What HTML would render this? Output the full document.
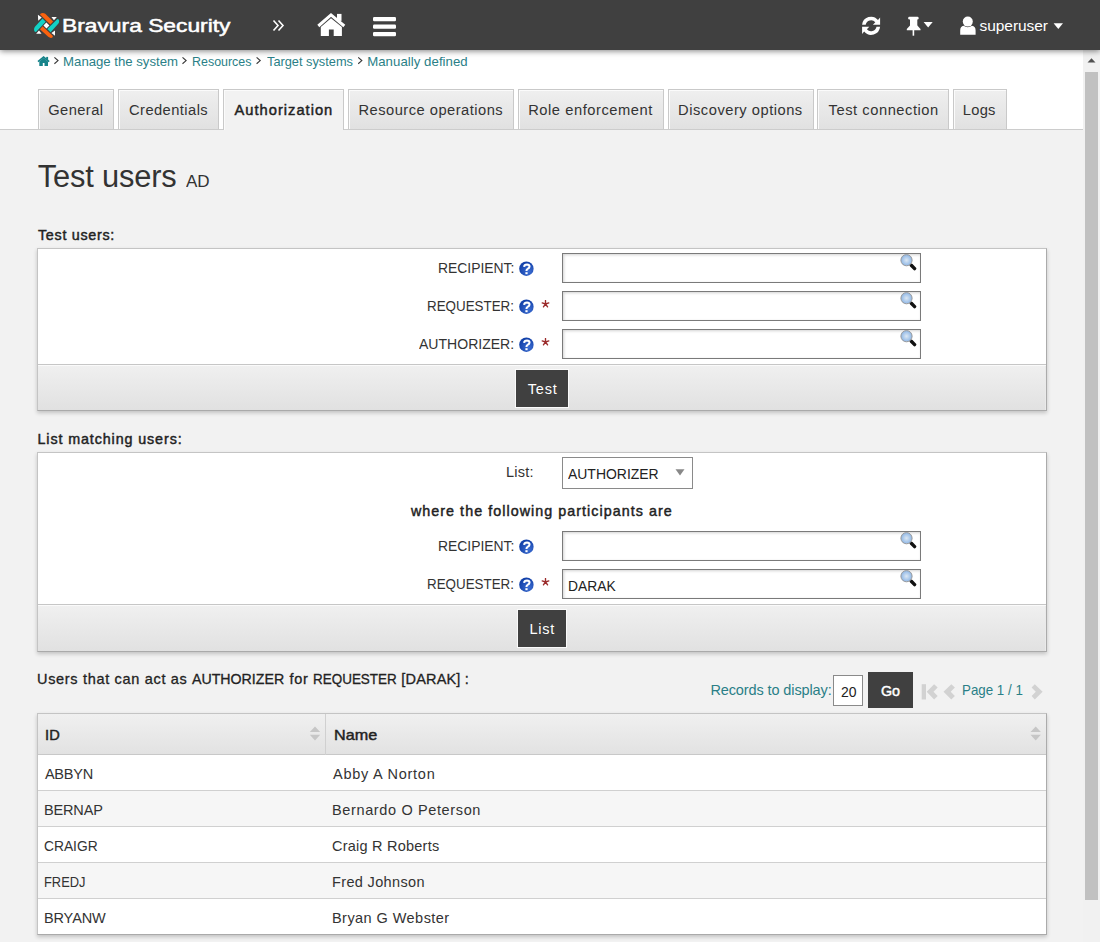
<!DOCTYPE html>
<html><head><meta charset="utf-8">
<style>
*{box-sizing:border-box;margin:0;padding:0}
html,body{width:1100px;height:942px;overflow:hidden;background:#f2f2f2;font-family:"Liberation Sans",sans-serif;color:#333}
.a{position:absolute}
.t{position:absolute;white-space:nowrap;font-family:"Liberation Sans",sans-serif}
#hdr{position:absolute;left:0;top:0;width:1100px;height:50px;background:#404040;box-shadow:0 1px 6px rgba(0,0,0,.5);z-index:2}
#top{position:absolute;left:0;top:50px;width:1083px;height:80px;background:#fff;border-bottom:1px solid #ccc}
.tab{position:absolute;top:89px;height:40px;border:1px solid #c9c9c9;border-bottom:none;background:linear-gradient(#efefef,#e1e1e1);box-shadow:inset 1px 1px 0 #fbfbfb}
.tab.act{background:#f2f2f2;height:41px}
.panel{position:absolute;left:37px;width:1010px;background:#fff;border:1px solid #c4c4c4;border-right-color:#ababab;border-bottom-color:#aaa;box-shadow:0 2px 4px rgba(0,0,0,.2)}
.foot{position:absolute;left:0;right:0;bottom:0;border-top:1px solid #c6c6c6;background:linear-gradient(#f0f0f0,#e1e1e1);box-shadow:inset 0 1px 0 #fafafa,inset -1px 0 0 #eaeaea}
.inp{position:absolute;border:1px solid #7a7a7a;background:#fff;box-shadow:inset 1px 1px 3px rgba(0,0,0,.18)}
.btn{position:absolute;background:#404040;border:1px solid #fafafa}
</style></head><body>
<div id="hdr">
<svg class="a" style="left:32px;top:10px" width="30" height="30" viewBox="0 0 942 942">
  <path fill="#f9620f" d="M250 145 Q258 95 330 95 Q385 95 415 120 L665 365 L575 455 Z"/>
  <path fill="#f9620f" d="M250 605 L335 510 L648 805 Q672 850 625 872 Q565 885 520 850 Z"/>
  <path fill="#12d2c6" d="M330 270 L430 370 L125 688 Q72 692 64 625 Q60 560 100 520 Z"/>
  <path fill="#12d2c6" d="M480 600 L792 288 Q842 275 852 340 Q858 390 830 420 L585 702 Z"/>
  <path fill="#fff" d="M185 150 L305 235 L195 335 Z M610 220 L780 220 L690 320 Z M130 745 L300 745 L220 640 Z M722 640 L722 812 L610 722 Z M452 390 L547 485 L455 582 L360 490 Z"/>
</svg>
<svg class="a" style="left:270px;top:17px" width="18" height="17" viewBox="270 17 18 17">
  <path fill="none" stroke="#fff" stroke-width="1.6" d="M273.5 20.5 L278 25.5 L273.5 30.5 M278.5 20.5 L283 25.5 L278.5 30.5"/>
</svg>
<svg class="a" style="left:315px;top:12px" width="32" height="26" viewBox="315 12 32 26">
  <path fill="none" stroke="#fff" stroke-width="3" d="M318.3 26 L331 14.9 L344.3 26"/>
  <rect fill="#fff" x="337" y="13.9" width="4.5" height="7"/>
  <path fill="#fff" d="M320.8 36.1 L320.8 27 L331 18.2 L341.9 27 L341.9 36.1 L333.7 36.1 L333.7 29.6 L328.9 29.6 L328.9 36.1 Z"/>
</svg>
<svg class="a" style="left:370px;top:14px" width="30" height="26" viewBox="370 14 30 26">
  <rect fill="#fff" x="373" y="17" width="23" height="4.3" rx="1.2"/>
  <rect fill="#fff" x="373" y="24.5" width="23" height="4.3" rx="1.2"/>
  <rect fill="#fff" x="373" y="31.9" width="23" height="4.3" rx="1.2"/>
</svg>
<svg class="a" style="left:858px;top:14px" width="26" height="24" viewBox="858 14 26 24">
  <path fill="#fff" d="M862.1 24.8 A9 9 0 0 1 878 20 L880.1 17.5 L880.1 24.8 L872.9 24.8 L875.3 22.3 A5.5 5.5 0 0 0 865.7 24.8 Z"/>
  <path fill="#fff" d="M880.1 26.8 A9 9 0 0 1 864.2 31.6 L862.1 34.1 L862.1 26.8 L869.3 26.8 L866.9 29.3 A5.5 5.5 0 0 0 876.5 26.8 Z"/>
</svg>
<svg class="a" style="left:904px;top:14px" width="32" height="24" viewBox="904 14 32 24">
  <rect fill="#fff" x="908.2" y="16.8" width="10.4" height="2.6" rx="1.2"/>
  <rect fill="#fff" x="910" y="18.5" width="7.3" height="8.5"/>
  <path fill="#fff" d="M910 25.5 L917.3 25.5 L920.5 29 L920.5 30.3 L906.8 30.3 L906.8 29 Z"/>
  <rect fill="#fff" x="912.6" y="30" width="1.6" height="5.7"/>
  <path fill="#fff" d="M923.6 22 L932.7 22 L928.15 27.5 Z"/>
</svg>
<svg class="a" style="left:958px;top:14px" width="20" height="24" viewBox="958 14 20 24">
  <circle fill="#fff" cx="967.8" cy="21.6" r="5"/>
  <path fill="#fff" d="M960.2 34.7 L960.2 30.5 Q960.2 26.3 963.6 25.8 Q967.8 28.6 972 25.8 Q975.6 26.3 975.6 30.5 L975.6 34.7 Z"/>
</svg>
<svg class="a" style="left:1050px;top:20px" width="16" height="12" viewBox="1050 20 16 12">
  <path fill="#fff" d="M1053.6 23.3 L1063 23.3 L1058.3 29 Z"/>
</svg>
<div class="t" style="left:61.7px;top:16.8px;font-size:18.3px;line-height:18.3px;font-weight:400;color:#fff;letter-spacing:0px;transform:scaleX(1.2467);transform-origin:0 0;-webkit-text-stroke:0.5px #fff">Bravura Security</div>
<div class="t" style="left:979.5px;top:17.7px;font-size:15.5px;line-height:15.5px;font-weight:400;color:#fff;letter-spacing:-0.05px;">superuser</div></div>
<div id="top"></div>
<svg class="a" style="left:36px;top:54px" width="16" height="14" viewBox="36 54 16 14">
  <path fill="none" stroke="#16838a" stroke-width="1.7" d="M38 61.6 L43.6 57 L49.2 61.6"/>
  <rect fill="#16838a" x="46.2" y="56.9" width="1.9" height="3"/>
  <path fill="#16838a" d="M39.3 65.9 L39.3 61.4 L43.6 57.9 L48 61.4 L48 65.9 L44.5 65.9 L44.5 63.1 L42.8 63.1 L42.8 65.9 Z"/>
</svg>
<svg class="a" style="left:50px;top:50px" width="420" height="22" viewBox="50 50 420 22">
  <path fill="none" stroke="#3a3a3a" stroke-width="1.15" d="M54.4 57.4 L58 60.6 L54.4 63.8 M182.5 57.4 L186.1 60.6 L182.5 63.8 M256.6 57.4 L260.2 60.6 L256.6 63.8 M358.2 57.4 L361.8 60.6 L358.2 63.8"/>
</svg>
<div class="tab" style="left:38px;width:76px"></div>
<div class="tab" style="left:118px;width:101px"></div>
<div class="tab act" style="left:223px;width:121px"></div>
<div class="tab" style="left:348px;width:166px"></div>
<div class="tab" style="left:518px;width:146px"></div>
<div class="tab" style="left:668px;width:146px"></div>
<div class="tab" style="left:817px;width:132px"></div>
<div class="tab" style="left:953px;width:54px"></div>
<div class="panel" style="top:248px;height:163px"><div class="foot" style="height:46px"></div></div>
<svg class="a" style="left:518.5px;top:298.8px" width="15" height="15" viewBox="0 0 15 15"><defs><radialGradient id="hg" cx="65%" cy="70%" r="65%"><stop offset="0" stop-color="#3d6fd4"/><stop offset="1" stop-color="#1442aa"/></radialGradient></defs><circle cx="7.4" cy="7.7" r="7.2" fill="url(#hg)"/><path fill="none" stroke="#fff" stroke-width="2.1" d="M5.1 5.8 Q5.4 3.5 8 3.5 Q10.6 3.6 10.5 5.7 Q10.4 7 8.6 7.9 Q7.5 8.4 7.5 9.9"/><rect fill="#fff" x="6.4" y="11.2" width="2.2" height="2"/></svg>
<svg class="a" style="left:518.5px;top:260.8px" width="15" height="15" viewBox="0 0 15 15"><defs><radialGradient id="hg" cx="65%" cy="70%" r="65%"><stop offset="0" stop-color="#3d6fd4"/><stop offset="1" stop-color="#1442aa"/></radialGradient></defs><circle cx="7.4" cy="7.7" r="7.2" fill="url(#hg)"/><path fill="none" stroke="#fff" stroke-width="2.1" d="M5.1 5.8 Q5.4 3.5 8 3.5 Q10.6 3.6 10.5 5.7 Q10.4 7 8.6 7.9 Q7.5 8.4 7.5 9.9"/><rect fill="#fff" x="6.4" y="11.2" width="2.2" height="2"/></svg>
<svg class="a" style="left:541px;top:299.5px" width="9" height="9" viewBox="0 0 9 9"><path stroke="#9b2b2b" stroke-width="1.35" stroke-linecap="round" d="M4.5 4 L4.50 0.50 M4.5 4 L7.83 2.92 M4.5 4 L6.56 6.83 M4.5 4 L2.44 6.83 M4.5 4 L1.17 2.92"/></svg>
<svg class="a" style="left:518.5px;top:336.8px" width="15" height="15" viewBox="0 0 15 15"><defs><radialGradient id="hg" cx="65%" cy="70%" r="65%"><stop offset="0" stop-color="#3d6fd4"/><stop offset="1" stop-color="#1442aa"/></radialGradient></defs><circle cx="7.4" cy="7.7" r="7.2" fill="url(#hg)"/><path fill="none" stroke="#fff" stroke-width="2.1" d="M5.1 5.8 Q5.4 3.5 8 3.5 Q10.6 3.6 10.5 5.7 Q10.4 7 8.6 7.9 Q7.5 8.4 7.5 9.9"/><rect fill="#fff" x="6.4" y="11.2" width="2.2" height="2"/></svg>
<svg class="a" style="left:541px;top:337.5px" width="9" height="9" viewBox="0 0 9 9"><path stroke="#9b2b2b" stroke-width="1.35" stroke-linecap="round" d="M4.5 4 L4.50 0.50 M4.5 4 L7.83 2.92 M4.5 4 L6.56 6.83 M4.5 4 L2.44 6.83 M4.5 4 L1.17 2.92"/></svg>
<div class="inp" style="left:562px;top:253px;width:359px;height:30px"></div>
<div class="inp" style="left:562px;top:291px;width:359px;height:30px"></div>
<div class="inp" style="left:562px;top:329px;width:359px;height:30px"></div>
<svg class="a" style="left:899px;top:253px" width="18" height="18" viewBox="0 0 18 18"><defs><radialGradient id="mg899253" cx="50%" cy="50%" r="50%"><stop offset="0" stop-color="#dde8f3"/><stop offset="1" stop-color="#8db6e6"/></radialGradient></defs><path stroke="#111" stroke-width="3.4" stroke-linecap="round" d="M12.3 12.2 L15.6 15.6"/><circle cx="7.5" cy="7.2" r="5.6" fill="url(#mg899253)" stroke="#9a9a9a" stroke-width="1"/></svg>
<svg class="a" style="left:899px;top:291px" width="18" height="18" viewBox="0 0 18 18"><defs><radialGradient id="mg899291" cx="50%" cy="50%" r="50%"><stop offset="0" stop-color="#dde8f3"/><stop offset="1" stop-color="#8db6e6"/></radialGradient></defs><path stroke="#111" stroke-width="3.4" stroke-linecap="round" d="M12.3 12.2 L15.6 15.6"/><circle cx="7.5" cy="7.2" r="5.6" fill="url(#mg899291)" stroke="#9a9a9a" stroke-width="1"/></svg>
<svg class="a" style="left:899px;top:329px" width="18" height="18" viewBox="0 0 18 18"><defs><radialGradient id="mg899329" cx="50%" cy="50%" r="50%"><stop offset="0" stop-color="#dde8f3"/><stop offset="1" stop-color="#8db6e6"/></radialGradient></defs><path stroke="#111" stroke-width="3.4" stroke-linecap="round" d="M12.3 12.2 L15.6 15.6"/><circle cx="7.5" cy="7.2" r="5.6" fill="url(#mg899329)" stroke="#9a9a9a" stroke-width="1"/></svg>
<div class="btn" style="left:515px;top:369px;width:54px;height:39px"></div>
<div class="panel" style="top:452px;height:200px"><div class="foot" style="height:47px"></div></div>
<div class="inp" style="left:562px;top:457px;width:131px;height:32px;box-shadow:none;border-color:#8a8a8a"></div>
<svg class="a" style="left:674px;top:468px" width="12" height="9" viewBox="0 0 12 9"><path fill="#888" d="M1.5 1.3 L10.5 1.3 L6 7.4 Z"/></svg>
<svg class="a" style="left:518.5px;top:538.8px" width="15" height="15" viewBox="0 0 15 15"><defs><radialGradient id="hg" cx="65%" cy="70%" r="65%"><stop offset="0" stop-color="#3d6fd4"/><stop offset="1" stop-color="#1442aa"/></radialGradient></defs><circle cx="7.4" cy="7.7" r="7.2" fill="url(#hg)"/><path fill="none" stroke="#fff" stroke-width="2.1" d="M5.1 5.8 Q5.4 3.5 8 3.5 Q10.6 3.6 10.5 5.7 Q10.4 7 8.6 7.9 Q7.5 8.4 7.5 9.9"/><rect fill="#fff" x="6.4" y="11.2" width="2.2" height="2"/></svg>
<svg class="a" style="left:518.5px;top:576.8px" width="15" height="15" viewBox="0 0 15 15"><defs><radialGradient id="hg" cx="65%" cy="70%" r="65%"><stop offset="0" stop-color="#3d6fd4"/><stop offset="1" stop-color="#1442aa"/></radialGradient></defs><circle cx="7.4" cy="7.7" r="7.2" fill="url(#hg)"/><path fill="none" stroke="#fff" stroke-width="2.1" d="M5.1 5.8 Q5.4 3.5 8 3.5 Q10.6 3.6 10.5 5.7 Q10.4 7 8.6 7.9 Q7.5 8.4 7.5 9.9"/><rect fill="#fff" x="6.4" y="11.2" width="2.2" height="2"/></svg>
<svg class="a" style="left:541px;top:577.5px" width="9" height="9" viewBox="0 0 9 9"><path stroke="#9b2b2b" stroke-width="1.35" stroke-linecap="round" d="M4.5 4 L4.50 0.50 M4.5 4 L7.83 2.92 M4.5 4 L6.56 6.83 M4.5 4 L2.44 6.83 M4.5 4 L1.17 2.92"/></svg>
<div class="inp" style="left:562px;top:531px;width:359px;height:30px"></div>
<div class="inp" style="left:562px;top:569px;width:359px;height:30px"></div>
<svg class="a" style="left:899px;top:531px" width="18" height="18" viewBox="0 0 18 18"><defs><radialGradient id="mg899531" cx="50%" cy="50%" r="50%"><stop offset="0" stop-color="#dde8f3"/><stop offset="1" stop-color="#8db6e6"/></radialGradient></defs><path stroke="#111" stroke-width="3.4" stroke-linecap="round" d="M12.3 12.2 L15.6 15.6"/><circle cx="7.5" cy="7.2" r="5.6" fill="url(#mg899531)" stroke="#9a9a9a" stroke-width="1"/></svg>
<svg class="a" style="left:899px;top:569px" width="18" height="18" viewBox="0 0 18 18"><defs><radialGradient id="mg899569" cx="50%" cy="50%" r="50%"><stop offset="0" stop-color="#dde8f3"/><stop offset="1" stop-color="#8db6e6"/></radialGradient></defs><path stroke="#111" stroke-width="3.4" stroke-linecap="round" d="M12.3 12.2 L15.6 15.6"/><circle cx="7.5" cy="7.2" r="5.6" fill="url(#mg899569)" stroke="#9a9a9a" stroke-width="1"/></svg>
<div class="btn" style="left:517px;top:609px;width:50px;height:39px"></div>
<div class="a" style="left:833px;top:675px;width:30px;height:31px;background:#fff;border:1px solid #8a8a8a"></div>
<div class="btn" style="left:867px;top:671px;width:47px;height:38px;border-color:#f2f2f2"></div>
<svg class="a" style="left:918px;top:680px" width="130" height="24" viewBox="918 680 130 24">
  <g fill="#d2d2d2">
    <rect x="921.7" y="684.2" width="4.3" height="15.3"/>
    <path d="M926.7 691.8 L934.1 684.2 L937.7 687.6 L933.5 691.8 L937.7 696.1 L934.1 699.5 Z"/>
    <path d="M943.5 691.8 L951.3 684.2 L954.9 687.6 L950.7 691.8 L954.9 696.1 L951.3 699.5 Z"/>
    <path d="M1042.6 691.8 L1034.8 684.2 L1031.6 687.6 L1035.8 691.8 L1031.6 696.1 L1034.8 699.5 Z"/>
  </g>
</svg>
<div class="panel" style="top:713px;height:222px">
<div class="a" style="left:0;top:0;width:1008px;height:41px;background:linear-gradient(#f0f0f0,#e2e2e2);border-bottom:1px solid #c8c8c8"></div>
<div class="a" style="left:287px;top:0;width:1px;height:41px;background:#d0d0d0"></div>
<div class="a" style="left:0;top:41px;width:1008px;height:35px;background:#fff;"></div>
<div class="a" style="left:0;top:76px;width:1008px;height:36px;background:#f6f6f6;border-top:1px solid #d0d0d0;"></div>
<div class="a" style="left:0;top:112px;width:1008px;height:36px;background:#fff;border-top:1px solid #d0d0d0;"></div>
<div class="a" style="left:0;top:148px;width:1008px;height:36px;background:#f6f6f6;border-top:1px solid #d0d0d0;"></div>
<div class="a" style="left:0;top:184px;width:1008px;height:36px;background:#fff;border-top:1px solid #d0d0d0;"></div>
</div>
<svg class="a" style="left:300px;top:720px" width="750" height="25" viewBox="300 720 750 25"><path fill="#c6c6c6" d="M309.8 732 L320.2 732 L315 726.5 Z M309.8 734.8 L320.2 734.8 L315 740.4 Z M1030.5 732 L1040.9 732 L1035.7 726.5 Z M1030.5 734.8 L1040.9 734.8 L1035.7 740.4 Z"/></svg>
<div class="a" style="left:1083px;top:50px;width:17px;height:892px;background:#f1f1f1"></div>
<svg class="a" style="left:1083px;top:50px" width="17" height="20" viewBox="0 0 17 20"><path fill="#505050" d="M4.5 12.5 L8.5 8.3 L12.5 12.5 Z"/></svg>
<div class="a" style="left:1085px;top:72px;width:13px;height:828px;background:#c1c1c1"></div>
<div class="t" style="left:63.1px;top:54.8px;font-size:13.2px;line-height:13.2px;font-weight:400;color:#2a7f87;letter-spacing:-0.012px;">Manage the system</div>
<div class="t" style="left:191.9px;top:54.8px;font-size:13.2px;line-height:13.2px;font-weight:400;color:#2a7f87;letter-spacing:0px;transform:scaleX(0.9435);transform-origin:0 0;">Resources</div>
<div class="t" style="left:266.7px;top:54.8px;font-size:13.2px;line-height:13.2px;font-weight:400;color:#2a7f87;letter-spacing:0px;transform:scaleX(0.9693);transform-origin:0 0;">Target systems</div>
<div class="t" style="left:367.2px;top:54.8px;font-size:13.2px;line-height:13.2px;font-weight:400;color:#2a7f87;letter-spacing:0.053px;">Manually defined</div>
<div class="t" style="left:48.2px;top:103.0px;font-size:14.7px;line-height:14.7px;font-weight:400;color:#333;letter-spacing:0.433px;">General</div>
<div class="t" style="left:129.0px;top:103.0px;font-size:14.7px;line-height:14.7px;font-weight:400;color:#333;letter-spacing:0.44px;">Credentials</div>
<div class="t" style="left:234.5px;top:103.0px;font-size:14.7px;line-height:14.7px;font-weight:400;color:#222;letter-spacing:1.0px;;-webkit-text-stroke:0.45px #222">Authorization</div>
<div class="t" style="left:358.5px;top:103.0px;font-size:14.7px;line-height:14.7px;font-weight:400;color:#333;letter-spacing:0.478px;">Resource operations</div>
<div class="t" style="left:528.2px;top:103.0px;font-size:14.7px;line-height:14.7px;font-weight:400;color:#333;letter-spacing:0.546px;">Role enforcement</div>
<div class="t" style="left:678.1px;top:103.0px;font-size:14.7px;line-height:14.7px;font-weight:400;color:#333;letter-spacing:0.512px;">Discovery options</div>
<div class="t" style="left:828.6px;top:103.0px;font-size:14.7px;line-height:14.7px;font-weight:400;color:#333;letter-spacing:0.543px;">Test connection</div>
<div class="t" style="left:962.8px;top:103.0px;font-size:14.7px;line-height:14.7px;font-weight:400;color:#333;letter-spacing:0.267px;">Logs</div>
<div class="t" style="left:37.7px;top:162.4px;font-size:30.8px;line-height:30.8px;font-weight:400;color:#333;letter-spacing:-0.156px;">Test users</div>
<div class="t" style="left:185.5px;top:173.4px;font-size:17.4px;line-height:17.4px;font-weight:400;color:#333;letter-spacing:0px;transform:scaleX(0.9792);transform-origin:0 0;">AD</div>
<div class="t" style="left:38.0px;top:227.8px;font-size:14.3px;line-height:14.3px;font-weight:400;color:#222;letter-spacing:0.72px;;-webkit-text-stroke:0.45px #222">Test users:</div>
<div class="t" style="left:437.5px;top:261.0px;font-size:14.5px;line-height:14.5px;font-weight:400;color:#333;letter-spacing:0px;transform:scaleX(0.9577);transform-origin:0 0;">RECIPIENT:</div>
<div class="t" style="left:427.4px;top:298.9px;font-size:14.5px;line-height:14.5px;font-weight:400;color:#333;letter-spacing:0px;transform:scaleX(0.9228);transform-origin:0 0;">REQUESTER:</div>
<div class="t" style="left:419.3px;top:337.0px;font-size:14.5px;line-height:14.5px;font-weight:400;color:#333;letter-spacing:0px;transform:scaleX(0.9680);transform-origin:0 0;">AUTHORIZER:</div>
<div class="t" style="left:527.8px;top:381.9px;font-size:14.5px;line-height:14.5px;font-weight:400;color:#fff;letter-spacing:0.8px;">Test</div>
<div class="t" style="left:37.5px;top:431.7px;font-size:14.3px;line-height:14.3px;font-weight:400;color:#222;letter-spacing:0.895px;;-webkit-text-stroke:0.45px #222">List matching users:</div>
<div class="t" style="left:506.0px;top:465.0px;font-size:14.5px;line-height:14.5px;font-weight:400;color:#333;letter-spacing:0.25px;">List:</div>
<div class="t" style="left:568.0px;top:467.0px;font-size:14.5px;line-height:14.5px;font-weight:400;color:#222;letter-spacing:0px;transform:scaleX(0.9617);transform-origin:0 0;">AUTHORIZER</div>
<div class="t" style="left:410.9px;top:503.8px;font-size:14.3px;line-height:14.3px;font-weight:400;color:#222;letter-spacing:1.051px;;-webkit-text-stroke:0.45px #222">where the following participants are</div>
<div class="t" style="left:437.5px;top:539.0px;font-size:14.5px;line-height:14.5px;font-weight:400;color:#333;letter-spacing:0px;transform:scaleX(0.9577);transform-origin:0 0;">RECIPIENT:</div>
<div class="t" style="left:427.4px;top:576.9px;font-size:14.5px;line-height:14.5px;font-weight:400;color:#333;letter-spacing:0px;transform:scaleX(0.9228);transform-origin:0 0;">REQUESTER:</div>
<div class="t" style="left:567.7px;top:578.8px;font-size:14.5px;line-height:14.5px;font-weight:400;color:#222;letter-spacing:0px;transform:scaleX(0.9531);transform-origin:0 0;">DARAK</div>
<div class="t" style="left:529.4px;top:622.0px;font-size:14.5px;line-height:14.5px;font-weight:400;color:#fff;letter-spacing:0.8px;">List</div>
<div class="t" style="left:37.0px;top:671.9px;font-size:14.5px;line-height:14.5px;font-weight:400;color:#222;letter-spacing:0.68px;-webkit-text-stroke:0.3px #222">Users that can act as</div>
<div class="t" style="left:192.3px;top:671.9px;font-size:14.5px;line-height:14.5px;font-weight:400;color:#222;letter-spacing:0px;transform:scaleX(0.9777);transform-origin:0 0;-webkit-text-stroke:0.3px #222">AUTHORIZER</div>
<div class="t" style="left:289.6px;top:671.9px;font-size:14.5px;line-height:14.5px;font-weight:400;color:#222;letter-spacing:0.6px;-webkit-text-stroke:0.3px #222">for</div>
<div class="t" style="left:313.3px;top:671.9px;font-size:14.5px;line-height:14.5px;font-weight:400;color:#222;letter-spacing:0px;transform:scaleX(0.9281);transform-origin:0 0;-webkit-text-stroke:0.3px #222">REQUESTER</div>
<div class="t" style="left:401.3px;top:671.9px;font-size:14.5px;line-height:14.5px;font-weight:400;color:#222;letter-spacing:0.175px;-webkit-text-stroke:0.3px #222">[DARAK] :</div>
<div class="t" style="left:710.4px;top:683.0px;font-size:14.5px;line-height:14.5px;font-weight:400;color:#2a7f87;letter-spacing:-0.111px;">Records to display:</div>
<div class="t" style="left:840.6px;top:685.0px;font-size:14.5px;line-height:14.5px;font-weight:400;color:#222;letter-spacing:0px;transform:scaleX(0.9625);transform-origin:0 0;">20</div>
<div class="t" style="left:881.0px;top:684.0px;font-size:14.3px;line-height:14.3px;font-weight:400;color:#fff;letter-spacing:0.0px;;-webkit-text-stroke:0.45px #fff">Go</div>
<div class="t" style="left:961.7px;top:682.7px;font-size:14.5px;line-height:14.5px;font-weight:400;color:#2a7f87;letter-spacing:0px;transform:scaleX(0.9200);transform-origin:0 0;">Page 1 / 1</div>
<div class="t" style="left:45.0px;top:727.8px;font-size:14.6px;line-height:14.6px;font-weight:400;color:#222;letter-spacing:0.2px;;-webkit-text-stroke:0.45px #222">ID</div>
<div class="t" style="left:333.6px;top:727.8px;font-size:14.6px;line-height:14.6px;font-weight:400;color:#222;letter-spacing:0px;transform:scaleX(1.1079);transform-origin:0 0;;-webkit-text-stroke:0.45px #222">Name</div>
<div class="t" style="left:44.9px;top:767.0px;font-size:14.5px;line-height:14.5px;font-weight:400;color:#333;letter-spacing:-0.2px;">ABBYN</div>
<div class="t" style="left:333.0px;top:767.0px;font-size:14.5px;line-height:14.5px;font-weight:400;color:#333;letter-spacing:0.75px;">Abby A Norton</div>
<div class="t" style="left:43.9px;top:803.0px;font-size:14.5px;line-height:14.5px;font-weight:400;color:#333;letter-spacing:-0.12px;">BERNAP</div>
<div class="t" style="left:332.0px;top:803.0px;font-size:14.5px;line-height:14.5px;font-weight:400;color:#333;letter-spacing:0.633px;">Bernardo O Peterson</div>
<div class="t" style="left:43.9px;top:839.0px;font-size:14.5px;line-height:14.5px;font-weight:400;color:#333;letter-spacing:0px;transform:scaleX(0.9509);transform-origin:0 0;">CRAIGR</div>
<div class="t" style="left:332.0px;top:839.0px;font-size:14.5px;line-height:14.5px;font-weight:400;color:#333;letter-spacing:0.228px;">Craig R Roberts</div>
<div class="t" style="left:44.0px;top:875.0px;font-size:14.5px;line-height:14.5px;font-weight:400;color:#333;letter-spacing:0px;transform:scaleX(0.8889);transform-origin:0 0;">FREDJ</div>
<div class="t" style="left:332.0px;top:875.0px;font-size:14.5px;line-height:14.5px;font-weight:400;color:#333;letter-spacing:0.345px;">Fred Johnson</div>
<div class="t" style="left:43.9px;top:911.0px;font-size:14.5px;line-height:14.5px;font-weight:400;color:#333;letter-spacing:-0.08px;">BRYANW</div>
<div class="t" style="left:332.0px;top:911.0px;font-size:14.5px;line-height:14.5px;font-weight:400;color:#333;letter-spacing:0.442px;">Bryan G Webster</div>
</body></html>
